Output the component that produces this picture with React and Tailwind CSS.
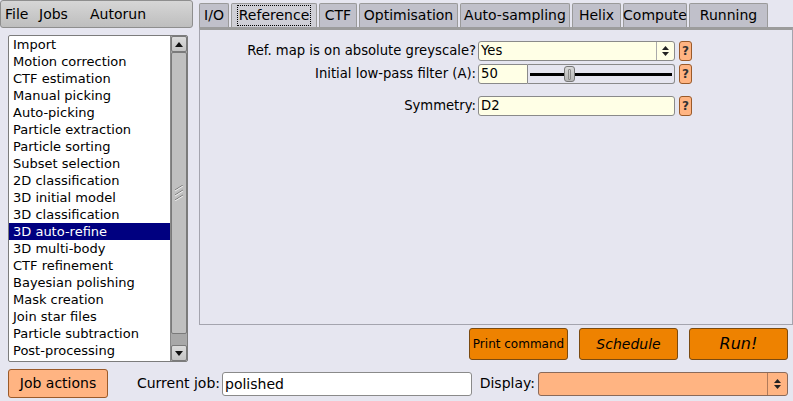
import React from "react";

const jobs = [
  "Import",
  "Motion correction",
  "CTF estimation",
  "Manual picking",
  "Auto-picking",
  "Particle extraction",
  "Particle sorting",
  "Subset selection",
  "2D classification",
  "3D initial model",
  "3D classification",
  "3D auto-refine",
  "3D multi-body",
  "CTF refinement",
  "Bayesian polishing",
  "Mask creation",
  "Join star files",
  "Particle subtraction",
  "Post-processing",
];

const tabs = [
  { name: "I/O", w: "w-[30px]" },
  { name: "Reference", w: "w-[86px]", active: true },
  { name: "CTF", w: "w-[38px]" },
  { name: "Optimisation", w: "w-[99px]" },
  { name: "Auto-sampling", w: "w-[110px]" },
  { name: "Helix", w: "w-[49px]" },
  { name: "Compute", w: "w-[64px]" },
  { name: "Running", w: "w-[79px]" },
];

// little up/down arrows used by fltk choice widgets
const UpDown = () => (
  <svg width="9" height="12" viewBox="0 0 9 12">
    <path d="M4.5 1 L8 5 L1 5 Z" fill="#222" />
    <path d="M4.5 11 L8 7 L1 7 Z" fill="#222" />
  </svg>
);

const Help = () => (
  <div className="ml-[4px] w-[13px] h-[20px] rounded-[3px] border border-[#9a5a2a] bg-[#ffb482] flex items-center justify-center text-[12px] font-bold leading-none text-[#333]">
    ?
  </div>
);

const ScrollBtn = ({ down }) => (
  <div className="h-[16px] w-full rounded-[2px] border border-[#7a7a7a] bg-gradient-to-b from-[#dcdcdc] to-[#c4c4c4] flex items-center justify-center">
    <svg width="8" height="5" viewBox="0 0 8 5">
      {down ? <path d="M0 0 L8 0 L4 5 Z" fill="#111" /> : <path d="M0 5 L8 5 L4 0 Z" fill="#111" />}
    </svg>
  </div>
);

export default function App() {
  return (
    <div
      className="w-[793px] h-[401px] bg-[#e6e6f0] text-[13px] text-black overflow-hidden"
      style={{ fontFamily: '"DejaVu Sans", Verdana, sans-serif' }}
    >
      <div className="flex h-[365px]">
        {/* left column */}
        <div className="w-[193px] shrink-0">
          <div className="h-[28px] rounded-[3px] border border-[#8e8e8e] bg-gradient-to-b from-[#d6d6d6] to-[#bebebe] flex items-center pl-[4px] text-[14px]">
            <span className="w-[34px]">File</span>
            <span className="w-[51px]">Jobs</span>
            <span>Autorun</span>
          </div>
          <div className="mt-[7px] ml-[8px] w-[180px] h-[327px] border border-[#7c7c7c] rounded-[2px] bg-white flex">
            <div className="flex-1">
              {jobs.map((j) => (
                <div
                  key={j}
                  className={`h-[17px] leading-[17px] pl-[4px] whitespace-nowrap ${
                    j === "3D auto-refine" ? "bg-[#000080] text-white" : ""
                  }`}
                >
                  {j}
                </div>
              ))}
            </div>
            <div className="w-[17px] bg-[#a8a8a8] border-l border-[#8a8a8a] flex flex-col">
              <ScrollBtn />
              <div className="h-[282px] rounded-[2px] border border-[#7a7a7a] bg-[#c0c0c0] flex items-center justify-center">
                <svg width="10" height="16" viewBox="0 0 10 16">
                  <path d="M1 5 L9 0 M1 10 L9 5 M1 15 L9 10" stroke="#777" strokeWidth="1" />
                  <path d="M1 6 L9 1 M1 11 L9 6 M1 16 L9 11" stroke="#eee" strokeWidth="1" />
                </svg>
              </div>
              <div className="flex-1" />
              <ScrollBtn down />
            </div>
          </div>
        </div>

        {/* right column */}
        <div className="ml-[6px] flex-1 flex flex-col">
          <div className="flex gap-[2px] pt-[3px] h-[27px]">
            {tabs.map((t) => (
              <div
                key={t.name}
                className={`${t.w} h-[24px] border border-b-0 rounded-t-[2px] flex items-center justify-center text-[14px] ${
                  t.active ? "bg-[#cfcfd6] border-[#9a9a9a]" : "bg-[#c0c0ca] border-[#9a9a9a]"
                }`}
              >
                <span className={t.active ? "border border-dotted border-black px-[1px] leading-[19px]" : ""}>
                  {t.name}
                </span>
              </div>
            ))}
          </div>
          <div className="h-[298px] border border-[#a4a4ae] border-t-[3px] border-t-[#9c9c9c] pt-[11px] text-[13.2px]">
            <div className="flex items-center h-[20px]">
              <div className="w-[278px] text-right pr-[2px] whitespace-nowrap">Ref. map is on absolute greyscale?</div>
              <div className="w-[197px] h-[20px] rounded-[3px] border border-[#8a8a8a] bg-[#ffffe6] flex items-center">
                <span className="flex-1 pl-[2px]">Yes</span>
                <div className="w-[18px] h-full border-l border-[#aaa] flex items-center justify-center">
                  <UpDown />
                </div>
              </div>
              <Help />
            </div>
            <div className="flex items-center h-[20px] mt-[3px]">
              <div className="w-[278px] text-right pr-[2px] whitespace-nowrap">Initial low-pass filter (A):</div>
              <div className="w-[50px] h-[20px] rounded-l-[3px] border border-[#8a8a8a] bg-[#ffffe6] pl-[2px] leading-[18px]">
                50
              </div>
              <div className="w-[147px] h-[20px] rounded-r-[3px] border border-l-0 border-[#8a8a8a] flex items-center px-[2px] relative">
                <div className="w-full h-[3px] bg-black" />
                <div className="absolute left-[36px] top-[1px] w-[11px] h-[16px] rounded-[3px] border border-[#777] bg-gradient-to-b from-[#d8d8d8] to-[#b4b4b4] flex justify-center">
                  <div className="w-[3px] h-[11px] mt-[2px] border border-[#888] rounded-[1px]" />
                </div>
              </div>
              <Help />
            </div>
            <div className="flex items-center h-[20px] mt-[12px]">
              <div className="w-[278px] text-right pr-[2px] whitespace-nowrap">Symmetry:</div>
              <div className="w-[197px] h-[20px] rounded-[3px] border border-[#8a8a8a] bg-[#ffffe6] pl-[2px] leading-[18px]">
                D2
              </div>
              <Help />
            </div>
          </div>
          <div className="flex justify-end gap-[11px] mt-[3px] pr-[5px]">
            <button className="w-[99px] h-[32px] rounded-[3px] border border-[#7a4a10] bg-[#ee8200] text-[12px]">
              Print command
            </button>
            <button className="w-[99px] h-[32px] rounded-[3px] border border-[#7a4a10] bg-[#ee8200] italic text-[14px]">
              Schedule
            </button>
            <button className="w-[99px] h-[32px] rounded-[3px] border border-[#7a4a10] bg-[#ee8200] italic text-[16px]">
              Run!
            </button>
          </div>
        </div>
      </div>

      {/* bottom row */}
      <div className="flex items-center mt-[4px] h-[29px] text-[14px]">
        <button className="ml-[8px] w-[100px] h-[29px] rounded-[3px] border border-[#9a5a2a] bg-[#ffb482]">
          Job actions
        </button>
        <span className="w-[114px] text-right pr-[2px] whitespace-nowrap">Current job:</span>
        <div className="w-[250px] h-[24px] rounded-[3px] border border-[#8a8a8a] bg-white pl-[2px] leading-[22px]">
          polished
        </div>
        <span className="w-[66px] text-right pr-[3px] whitespace-nowrap">Display:</span>
        <div className="w-[250px] h-[24px] rounded-[3px] border border-[#8a6a5a] bg-[#ffb482] flex justify-end">
          <div className="w-[20px] h-full border-l border-[#b07a5a] flex items-center justify-center">
            <UpDown />
          </div>
        </div>
      </div>
    </div>
  );
}
